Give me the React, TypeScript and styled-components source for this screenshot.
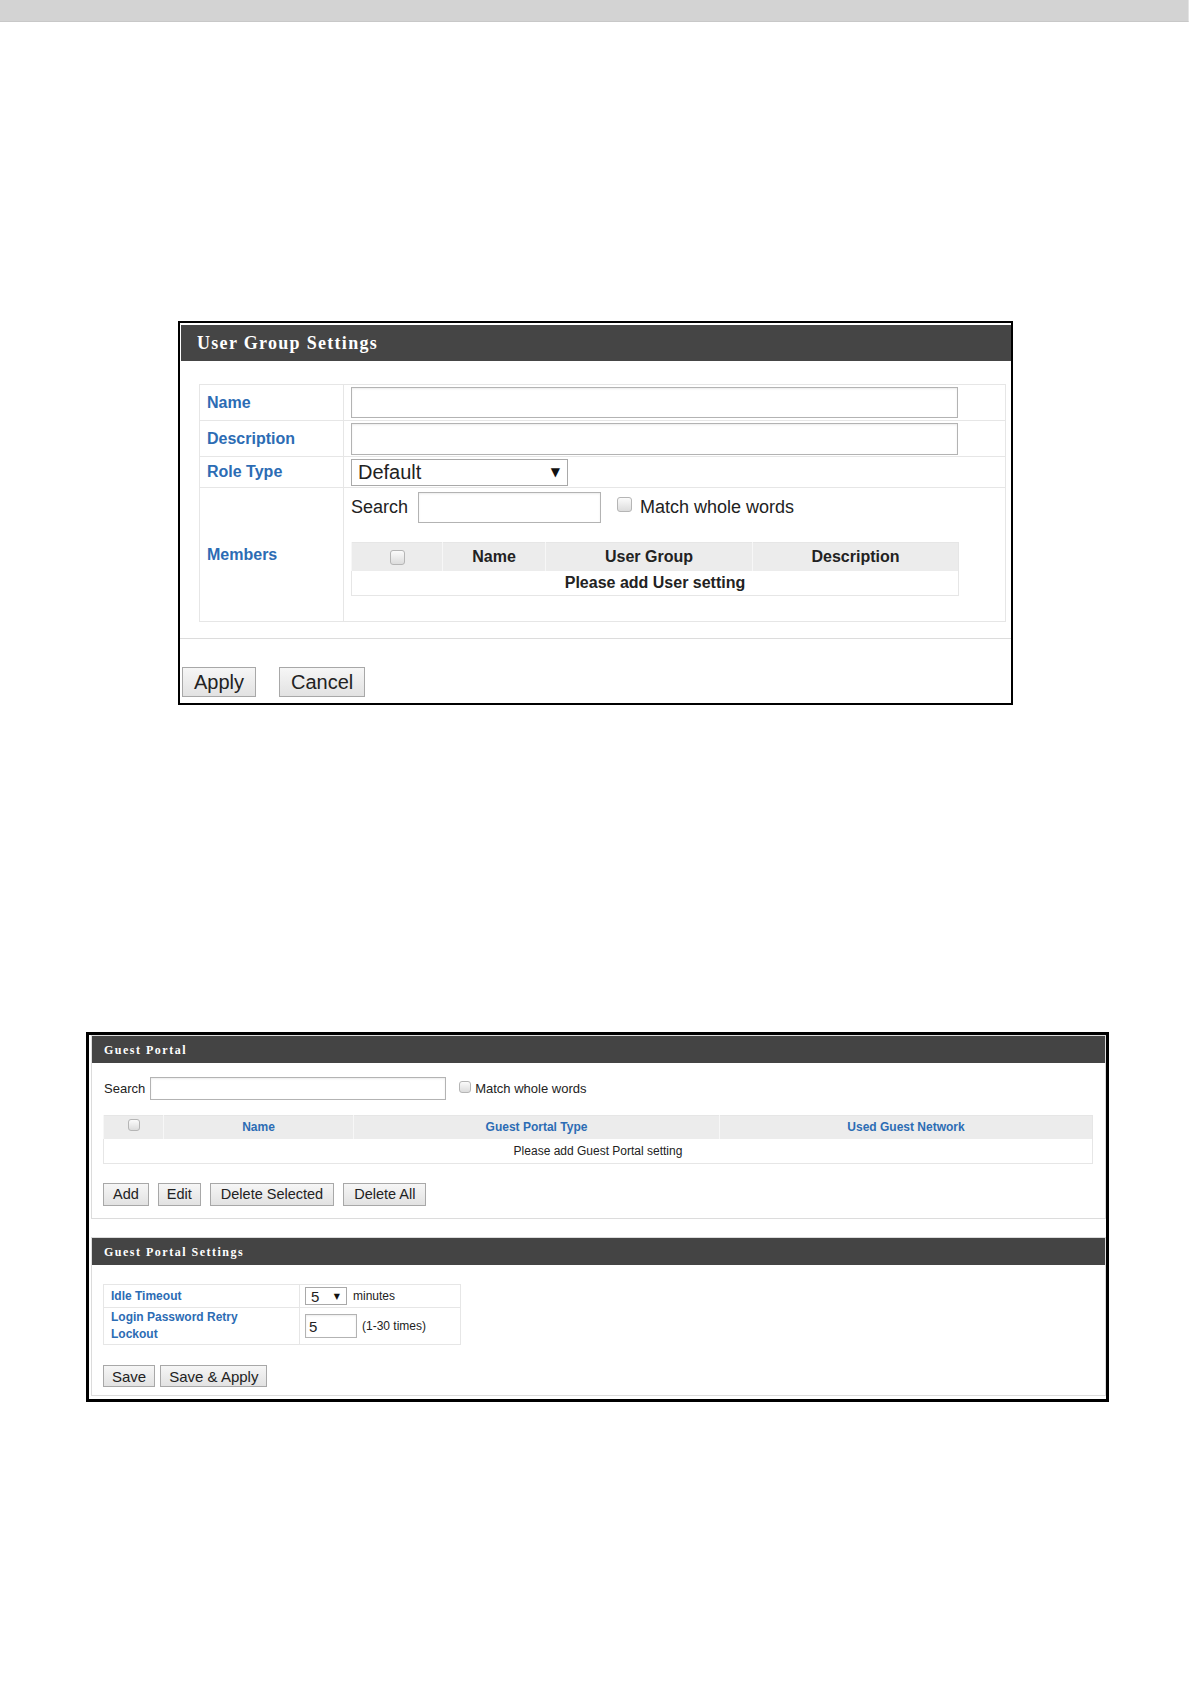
import React from 'react';
import styled, { createGlobalStyle } from 'styled-components';

const GlobalStyle = createGlobalStyle`
  html, body {
    margin: 0;
    padding: 0;
    background: #fff;
  }
  body {
    font-family: "Liberation Sans", Arial, sans-serif;
    color: #222;
  }
  * {
    box-sizing: border-box;
  }
`;

const Page = styled.div`
  width: 1191px;
  min-height: 1684px;
  display: flex;
  flex-direction: column;
  align-items: flex-start;
  background: #fff;
`;

const TopBar = styled.div`
  width: 1189px;
  height: 22px;
  background: #d3d3d3;
  border-bottom: 1px solid #c8c8c8;
  border-right: 1px solid #e4e4e4;
`;

const Frame = styled.section<{ $top: number; $left: number; $width: number; $border: number }>`
  margin: ${p => p.$top}px 0 0 ${p => p.$left}px;
  width: ${p => p.$width}px;
  border: ${p => p.$border}px solid #000;
  background: #fff;
`;

/* ---------- shared controls ---------- */

const Button = styled.button<{ $size: number; $h: number; $pad: number }>`
  height: ${p => p.$h}px;
  padding: 0 ${p => p.$pad}px;
  font-family: "Liberation Sans", Arial, sans-serif;
  font-size: ${p => p.$size}px;
  color: #222;
  background: linear-gradient(#f6f6f6, #e2e2e2);
  border: 1px solid #a8a8a8;
  border-radius: 0;
  line-height: 1;
`;

const TextBox = styled.div<{ $w: number; $h: number; $size?: number }>`
  width: ${p => p.$w}px;
  height: ${p => p.$h}px;
  border: 1px solid #b3b3b3;
  box-shadow: inset 0 1px 2px rgba(0, 0, 0, 0.08);
  background: #fff;
  font-size: ${p => p.$size || 14}px;
  padding-left: 3px;
  display: flex;
  align-items: center;
  flex-shrink: 0;
`;

const Select = styled.div<{ $w: number; $h: number; $size: number; $pad: number }>`
  width: ${p => p.$w}px;
  height: ${p => p.$h}px;
  border: 1px solid #a9a9a9;
  background: #fff;
  display: flex;
  align-items: center;
  justify-content: space-between;
  padding: 0 ${p => p.$pad}px 0 ${p => p.$pad - 1}px;
  font-size: ${p => p.$size}px;
  color: #222;
  flex-shrink: 0;
`;

const Arrow = styled.span<{ $size: number }>`
  font-family: "DejaVu Sans", sans-serif;
  font-size: ${p => p.$size}px;
  color: #111;
`;

const Check = styled.span<{ $size: number }>`
  display: inline-block;
  width: ${p => p.$size}px;
  height: ${p => p.$size}px;
  border: 1px solid #b5b5b5;
  border-radius: 3px;
  background: linear-gradient(#fbfbfb, #dcdcdc);
  flex-shrink: 0;
`;

const InlineRow = styled.div<{ $h: number }>`
  display: flex;
  align-items: center;
  height: ${p => p.$h}px;
`;

const Text = styled.span<{ $size: number; $ml?: number; $mr?: number }>`
  font-size: ${p => p.$size}px;
  color: #222;
  margin-left: ${p => p.$ml || 0}px;
  margin-right: ${p => p.$mr || 0}px;
  white-space: nowrap;
`;

const ButtonRow = styled.div<{ $gap: number; $top: number }>`
  display: flex;
  gap: ${p => p.$gap}px;
  margin-top: ${p => p.$top}px;
`;

/* ---------- User Group Settings ---------- */

const UgsHeader = styled.div`
  margin: 2px 0 0 1px;
  height: 36px;
  line-height: 37px;
  padding-left: 16px;
  background: #454545;
  color: #fff;
  font-family: "Liberation Serif", "Times New Roman", serif;
  font-weight: bold;
  font-size: 18px;
  letter-spacing: 1.3px;
`;

const UgsBody = styled.div`
  padding: 23px 5px 16px 19px;
  border-bottom: 1px solid #dcdcdc;
`;

const FormTable = styled.table<{ $w?: number }>`
  width: ${p => (p.$w ? `${p.$w}px` : '100%')};
  border-collapse: collapse;
  border: 1px solid #e6e6e6;
  table-layout: fixed;
`;

const LabelCell = styled.td<{ $w: number; $h: number; $size: number }>`
  width: ${p => p.$w}px;
  height: ${p => p.$h}px;
  border: 1px solid #e6e6e6;
  padding: 0 0 0 7px;
  color: #2c6cb4;
  font-weight: bold;
  font-size: ${p => p.$size}px;
  line-height: ${p => Math.round(p.$size * 1.4)}px;
  vertical-align: middle;
`;

const ValueCell = styled.td<{ $pad: number; $top?: boolean }>`
  border: 1px solid #e6e6e6;
  padding: ${p => (p.$top ? '4px' : '0')} 0 0 ${p => p.$pad}px;
  vertical-align: ${p => (p.$top ? 'top' : 'middle')};
`;

const MemberTable = styled.table`
  width: 608px;
  margin-top: 19px;
  border-collapse: collapse;
  table-layout: fixed;
  border: 1px solid #e6e6e6;
`;

const HeadCell = styled.th<{ $w?: number; $h: number; $size: number; $blue?: boolean }>`
  ${p => (p.$w ? `width: ${p.$w}px;` : '')}
  height: ${p => p.$h}px;
  background: #ececec;
  border-left: 1px solid #f7f7f7;
  font-size: ${p => p.$size}px;
  font-weight: bold;
  color: ${p => (p.$blue ? '#2c6cb4' : '#222')};
  text-align: center;
  vertical-align: middle;
  padding: 0;
`;

const EmptyCell = styled.td<{ $h: number; $size: number; $bold?: boolean }>`
  height: ${p => p.$h}px;
  text-align: center;
  font-size: ${p => p.$size}px;
  font-weight: ${p => (p.$bold ? 'bold' : 'normal')};
  color: #222;
  padding: 0;
`;

const UgsFooter = styled.div`
  display: flex;
  gap: 23px;
  padding: 28px 0 6px 2px;
`;

/* ---------- Guest Portal ---------- */

const Panel = styled.div<{ $top: number }>`
  margin: ${p => p.$top}px 0 0 2px;
  border: 1px solid #dcdcdc;
`;

const PanelHeader = styled.div`
  height: 27px;
  line-height: 28px;
  padding-left: 12px;
  background: #444;
  color: #fff;
  font-family: "Liberation Serif", "Times New Roman", serif;
  font-weight: bold;
  font-size: 12px;
  letter-spacing: 1.5px;
`;

const PanelBody = styled.div<{ $top: number; $bottom: number }>`
  padding: ${p => p.$top}px 12px ${p => p.$bottom}px 11px;
`;

const GuestTable = styled.table`
  width: 100%;
  margin-top: 15px;
  border-collapse: collapse;
  table-layout: fixed;
  border: 1px solid #e6e6e6;
`;

export default function App() {
  return (
    <Page>
      <GlobalStyle />
      <TopBar />

      <Frame $top={299} $left={178} $width={835} $border={2}>
        <UgsHeader>User Group Settings</UgsHeader>
        <UgsBody>
          <FormTable>
            <tbody>
              <tr>
                <LabelCell $w={144} $h={36} $size={16}>Name</LabelCell>
                <ValueCell $pad={7}>
                  <TextBox $w={607} $h={31} />
                </ValueCell>
              </tr>
              <tr>
                <LabelCell $w={144} $h={36} $size={16}>Description</LabelCell>
                <ValueCell $pad={7}>
                  <TextBox $w={607} $h={32} />
                </ValueCell>
              </tr>
              <tr>
                <LabelCell $w={144} $h={31} $size={16}>Role Type</LabelCell>
                <ValueCell $pad={7}>
                  <Select $w={217} $h={27} $size={20} $pad={7}>
                    <span>Default</span>
                    <Arrow $size={12}>▼</Arrow>
                  </Select>
                </ValueCell>
              </tr>
              <tr>
                <LabelCell $w={144} $h={134} $size={16}>Members</LabelCell>
                <ValueCell $pad={7} $top>
                  <InlineRow $h={31}>
                    <Text $size={18} $mr={10}>Search</Text>
                    <TextBox $w={183} $h={31} />
                    <Check $size={15} style={{ marginLeft: 16, marginTop: -6 }} />
                    <Text $size={18} $ml={8}>Match whole words</Text>
                  </InlineRow>
                  <MemberTable>
                    <thead>
                      <tr>
                        <HeadCell $w={91} $h={28} $size={16}>
                          <Check $size={15} style={{ verticalAlign: 'middle' }} />
                        </HeadCell>
                        <HeadCell $w={103} $h={28} $size={16}>Name</HeadCell>
                        <HeadCell $w={207} $h={28} $size={16}>User Group</HeadCell>
                        <HeadCell $h={28} $size={16}>Description</HeadCell>
                      </tr>
                    </thead>
                    <tbody>
                      <tr>
                        <EmptyCell colSpan={4} $h={25} $size={16} $bold>
                          Please add User setting
                        </EmptyCell>
                      </tr>
                    </tbody>
                  </MemberTable>
                </ValueCell>
              </tr>
            </tbody>
          </FormTable>
        </UgsBody>
        <UgsFooter>
          <Button $size={20} $h={30} $pad={11}>Apply</Button>
          <Button $size={20} $h={30} $pad={11}>Cancel</Button>
        </UgsFooter>
      </Frame>

      <Frame $top={327} $left={86} $width={1023} $border={3}>
        <Panel $top={0}>
          <PanelHeader>Guest Portal</PanelHeader>
          <PanelBody $top={14} $bottom={12}>
            <InlineRow $h={23}>
              <Text $size={13} $ml={1} $mr={5}>Search</Text>
              <TextBox $w={296} $h={23} />
              <Check $size={12} style={{ marginLeft: 13, marginTop: -4 }} />
              <Text $size={13} $ml={4}>Match whole words</Text>
            </InlineRow>
            <GuestTable>
              <thead>
                <tr>
                  <HeadCell $w={60} $h={23} $size={12}>
                    <Check $size={12} style={{ verticalAlign: 'middle', marginTop: -6 }} />
                  </HeadCell>
                  <HeadCell $w={190} $h={23} $size={12} $blue>Name</HeadCell>
                  <HeadCell $w={366} $h={23} $size={12} $blue>Guest Portal Type</HeadCell>
                  <HeadCell $h={23} $size={12} $blue>Used Guest Network</HeadCell>
                </tr>
              </thead>
              <tbody>
                <tr>
                  <EmptyCell colSpan={4} $h={25} $size={12}>Please add Guest Portal setting</EmptyCell>
                </tr>
              </tbody>
            </GuestTable>
            <ButtonRow $gap={9} $top={19}>
              <Button $size={14.5} $h={23} $pad={9}>Add</Button>
              <Button $size={14.5} $h={23} $pad={8}>Edit</Button>
              <Button $size={14.5} $h={23} $pad={10}>Delete Selected</Button>
              <Button $size={14.5} $h={23} $pad={10}>Delete All</Button>
            </ButtonRow>
          </PanelBody>
        </Panel>

        <Panel $top={18} style={{ marginBottom: 3 }}>
          <PanelHeader>Guest Portal Settings</PanelHeader>
          <PanelBody $top={19} $bottom={8}>
            <FormTable $w={358}>
              <tbody>
                <tr>
                  <LabelCell $w={196} $h={23} $size={12}>Idle Timeout</LabelCell>
                  <ValueCell $pad={5}>
                    <InlineRow $h={21}>
                      <Select $w={42} $h={18} $size={15} $pad={6}>
                        <span>5</span>
                        <Arrow $size={8}>▼</Arrow>
                      </Select>
                      <Text $size={12} $ml={6}>minutes</Text>
                    </InlineRow>
                  </ValueCell>
                </tr>
                <tr>
                  <LabelCell $w={196} $h={37} $size={12}>
                    Login Password Retry
                    <br />
                    Lockout
                  </LabelCell>
                  <ValueCell $pad={5}>
                    <InlineRow $h={35}>
                      <TextBox $w={52} $h={24} $size={15}>5</TextBox>
                      <Text $size={12} $ml={5}>(1-30 times)</Text>
                    </InlineRow>
                  </ValueCell>
                </tr>
              </tbody>
            </FormTable>
            <ButtonRow $gap={5} $top={20}>
              <Button $size={15} $h={22} $pad={8}>Save</Button>
              <Button $size={15} $h={22} $pad={8}>Save &amp; Apply</Button>
            </ButtonRow>
          </PanelBody>
        </Panel>
      </Frame>
    </Page>
  );
}
